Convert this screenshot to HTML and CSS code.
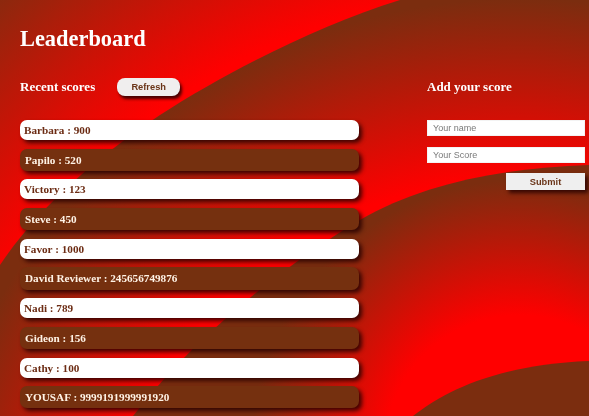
FILE: index.html
```html
<!DOCTYPE html>
<html lang="en">
<head>
<meta charset="utf-8">
<title>Leaderboard</title>
<link rel="stylesheet" href="styles.css">
</head>
<body>
<svg class="bg" viewBox="0 0 589 416" preserveAspectRatio="none" aria-hidden="true">
  <defs>
    <radialGradient id="gBase" gradientUnits="userSpaceOnUse" cx="520" cy="600" r="800">
      <stop offset="0.76" stop-color="#ff0000"/>
      <stop offset="1" stop-color="#882a0e"/>
    </radialGradient>
    <radialGradient id="gA" gradientUnits="userSpaceOnUse" cx="520" cy="600" r="620">
      <stop offset="0.68" stop-color="#ff0000"/>
      <stop offset="0.97" stop-color="#7b2d0f"/>
    </radialGradient>
    <radialGradient id="gB" gradientUnits="userSpaceOnUse" cx="520" cy="450" r="300">
      <stop offset="0.45" stop-color="#ff0000"/>
      <stop offset="0.9" stop-color="#7b2d0f"/>
    </radialGradient>
  </defs>
  <rect x="0" y="0" width="589" height="416" fill="url(#gBase)"/>
  <path d="M400,0 C320,25 230,70 160,115 C100,155 40,205 0,265 L0,416 L589,416 L589,0 Z" fill="url(#gA)"/>
  <path d="M589,165 C500,168 420,185 360,220 C290,262 200,330 133,416 L589,416 Z" fill="url(#gB)"/>
  <path d="M413,416 C440,395 490,365 589,361 L589,416 Z" fill="#7b2d0f"/>
</svg>
<main class="page">
  <h1 class="title">Leaderboard</h1>
  <div class="columns">
    <section class="scores">
      <div class="section-head">
        <h2 class="section-title">Recent scores</h2>
        <button class="refresh" type="button">Refresh</button>
      </div>
      <ul class="score-list">
        <li class="score light">Barbara : 900</li>
        <li class="score dark">Papilo : 520</li>
        <li class="score light">Victory : 123</li>
        <li class="score dark">Steve : 450</li>
        <li class="score light">Favor : 1000</li>
        <li class="score dark">David Reviewer : 245656749876</li>
        <li class="score light">Nadi : 789</li>
        <li class="score dark">Gideon : 156</li>
        <li class="score light">Cathy : 100</li>
        <li class="score dark">YOUSAF : 9999191999991920</li>
      </ul>
    </section>
    <section class="add">
      <div class="section-head">
        <h2 class="section-title">Add your score</h2>
      </div>
      <form class="score-form" onsubmit="return false">
        <input class="field" type="text" placeholder="Your name">
        <input class="field field-score" type="text" placeholder="Your Score">
        <button class="submit" type="submit">Submit</button>
      </form>
    </section>
  </div>
</main>
</body>
</html>
```

FILE: styles.css
```css
html, body {
  margin: 0;
  height: 100%;
}

body {
  font-family: "Liberation Serif", "Times New Roman", serif;
  color: #ffffff;
  background: #c81208;
  overflow: hidden;
}

.bg {
  position: fixed;
  top: 0;
  left: 0;
  width: 100%;
  height: 100%;
  z-index: -1;
  display: block;
}

.page {
  padding: 25.5px 4px 0 20px;
}

.title {
  margin: 0;
  font-size: 22.4px;
  line-height: 25px;
  font-weight: 700;
}

.columns {
  display: grid;
  grid-template-columns: 339px 158px;
  column-gap: 68px;
  margin-top: 27.5px;
}

.section-head {
  display: flex;
  align-items: center;
  gap: 22px;
  height: 18px;
  margin-bottom: 24px;
}

.section-title {
  margin: 0;
  font-size: 13px;
  line-height: 18px;
  font-weight: 700;
}

.refresh {
  width: 63px;
  height: 18px;
  padding: 0;
  border: 0;
  border-radius: 8px;
  background: #f0eeee;
  color: #6a3418;
  font: 700 9.3px "Liberation Sans", Arial, sans-serif;
  box-shadow: 2px 3px 3px rgba(40, 0, 0, 0.85);
}

.score-list {
  list-style: none;
  margin: 0;
  padding: 0;
  display: flex;
  flex-direction: column;
  gap: 8.5px;
}

.score {
  display: flex;
  align-items: center;
  border-radius: 7px;
  font-size: 11.2px;
  font-weight: 700;
  box-shadow: 3px 3px 4px rgba(40, 0, 0, 0.85);
}

.score.light {
  height: 20px;
  padding-left: 4px;
  background: #ffffff;
  color: #6c2c14;
}

.score.dark {
  height: 22.4px;
  padding-left: 5px;
  background: #75300f;
  color: #fff3e6;
}

.score-form {
  display: flex;
  flex-direction: column;
  align-items: flex-end;
  margin: 0;
}

.field {
  width: 100%;
  height: 16px;
  box-sizing: border-box;
  margin: 0;
  padding: 0 5px;
  border: 1px solid #f3f3f3;
  background: #ffffff;
  color: #333333;
  font: 9px "Liberation Sans", Arial, sans-serif;
  outline: none;
}

.field::placeholder {
  color: #7a7a7a;
}

.field-score {
  margin-top: 11px;
}

.submit {
  margin-top: 10px;
  width: 79px;
  height: 17px;
  padding: 0;
  border: 0;
  background: #efefef;
  color: #6a3418;
  font: 700 9.3px "Liberation Sans", Arial, sans-serif;
  box-shadow: 3px 3px 4px rgba(40, 0, 0, 0.85);
}
```
